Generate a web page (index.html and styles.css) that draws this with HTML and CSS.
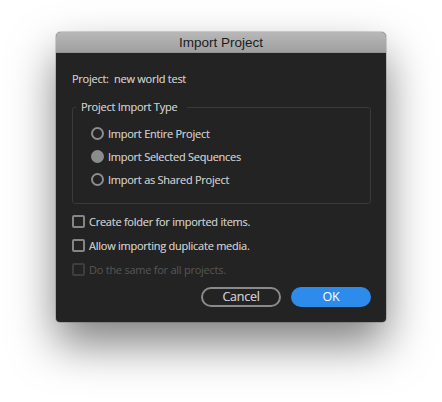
FILE: index.html
```html
<!DOCTYPE html>
<html>
<head>
<meta charset="utf-8">
<link rel="stylesheet" href="styles.css">
</head>
<body>
<div class="window">
  <div class="titlebar">Import Project</div>
  <div class="content">
    <div class="project-line">Project:&nbsp; new world test</div>
    <fieldset class="group">
      <legend>Project Import Type</legend>
      <div class="radio-row"><span class="radio"></span><span>Import Entire Project</span></div>
      <div class="radio-row"><span class="radio selected"></span><span>Import Selected Sequences</span></div>
      <div class="radio-row"><span class="radio"></span><span>Import as Shared Project</span></div>
    </fieldset>
    <div class="checks">
      <div class="check-row"><span class="check"></span><span>Create folder for imported items.</span></div>
      <div class="check-row"><span class="check"></span><span>Allow importing duplicate media.</span></div>
      <div class="check-row disabled"><span class="check"></span><span>Do the same for all projects.</span></div>
    </div>
    <div class="buttons">
      <div class="btn cancel">Cancel</div>
      <div class="btn ok">OK</div>
    </div>
  </div>
</div>
</body>
</html>
```
FILE: styles.css
```css
html, body {
  margin: 0;
  padding: 0;
  background: #ffffff;
}
body {
  padding: 32px 0 0 56px;
  width: 442px;
  height: 402px;
  box-sizing: border-box;
  overflow: hidden;
}
.window {
  width: 330px;
  height: 290px;
  background: #232323;
  border-radius: 5px 5px 4px 4px;
  box-shadow: 0 22px 45px rgba(0,0,0,0.5), 0 0 0 1px rgba(0,0,0,0.15);
  overflow: hidden;
  display: flex;
  flex-direction: column;
}
.titlebar {
  height: 21px;
  line-height: 21px;
  text-align: center;
  font-family: "Liberation Sans", Arial, sans-serif;
  font-size: 13.5px;
  color: #1c1c1c;
  background: linear-gradient(#b8b8b8, #a0a0a0);
  border-bottom: 1px solid #929292;
  box-sizing: border-box;
}
.content {
  padding: 18px 15px 14px 16px;
  font-family: "Open Sans", "Lato", sans-serif;
  font-size: 11px;
  letter-spacing: -0.25px;
  color: #c2c2c2;
  text-shadow: 0 0 0.4px rgba(194,194,194,0.8);
  display: flex;
  flex-direction: column;
}
.project-line {
  line-height: 16px;
  height: 16px;
}
.group {
  margin: 12px 0 0 0;
  padding: 7px 0 12px 18px;
  border: 1px solid #3a3a3a;
  border-radius: 3px;
}
.group legend {
  margin-left: -15px;
  padding: 0 10px 0 5px;
  line-height: 16px;
}
.radio-row {
  height: 23px;
  display: flex;
  align-items: center;
  gap: 4px;
}
.radio {
  width: 13px;
  height: 13px;
  box-sizing: border-box;
  border: 2px solid #8c8c8c;
  border-radius: 50%;
}
.radio.selected {
  background: #8c8c8c;
}
.checks {
  margin-top: 5px;
  display: flex;
  flex-direction: column;
}
.check-row {
  height: 24px;
  display: flex;
  align-items: center;
  gap: 4px;
}
.check {
  width: 13px;
  height: 13px;
  box-sizing: border-box;
  border: 2px solid #858585;
  border-radius: 2px;
}
.check-row.disabled {
  color: #575757;
  text-shadow: none;
}
.check-row.disabled .check {
  border-color: #3e3e3e;
}
.buttons {
  margin-top: 6px;
  display: flex;
  justify-content: flex-end;
  gap: 10px;
}
.btn {
  width: 80px;
  height: 20px;
  box-sizing: border-box;
  border-radius: 10px;
  text-align: center;
  line-height: 20px;
  font-size: 12.5px;
}
.cancel {
  border: 2px solid #8a8a8a;
  line-height: 16px;
  color: #c4c4c4;
}
.ok {
  background: #2d8ceb;
  color: #ffffff;
  text-shadow: none;
}
```
